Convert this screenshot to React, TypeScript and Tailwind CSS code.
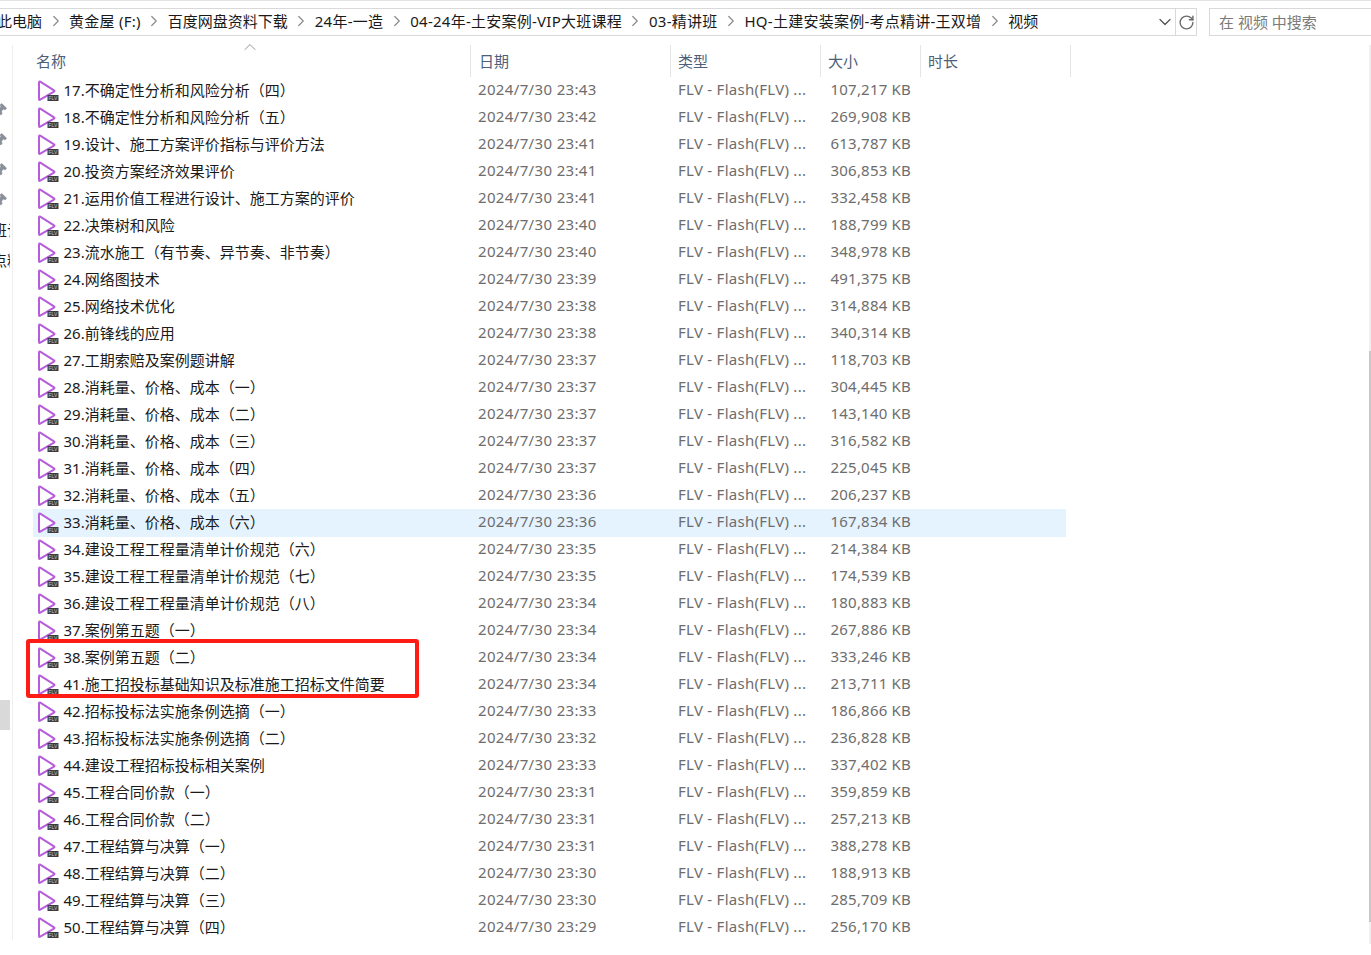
import { ChevronRight, ChevronDown, ChevronUp, RotateCw, Pin } from "lucide-react";

const pathParts = [
  "此电脑",
  "黄金屋 (F:)",
  "百度网盘资料下载",
  "24年-一造",
  "04-24年-土安案例-VIP大班课程",
  "03-精讲班",
  "HQ-土建安装案例-考点精讲-王双增",
  "视频",
];

const files: [string, string, string][] = [
  ["17.不确定性分析和风险分析（四）", "23:43", "107,217"],
  ["18.不确定性分析和风险分析（五）", "23:42", "269,908"],
  ["19.设计、施工方案评价指标与评价方法", "23:41", "613,787"],
  ["20.投资方案经济效果评价", "23:41", "306,853"],
  ["21.运用价值工程进行设计、施工方案的评价", "23:41", "332,458"],
  ["22.决策树和风险", "23:40", "188,799"],
  ["23.流水施工（有节奏、异节奏、非节奏）", "23:40", "348,978"],
  ["24.网络图技术", "23:39", "491,375"],
  ["25.网络技术优化", "23:38", "314,884"],
  ["26.前锋线的应用", "23:38", "340,314"],
  ["27.工期索赔及案例题讲解", "23:37", "118,703"],
  ["28.消耗量、价格、成本（一）", "23:37", "304,445"],
  ["29.消耗量、价格、成本（二）", "23:37", "143,140"],
  ["30.消耗量、价格、成本（三）", "23:37", "316,582"],
  ["31.消耗量、价格、成本（四）", "23:37", "225,045"],
  ["32.消耗量、价格、成本（五）", "23:36", "206,237"],
  ["33.消耗量、价格、成本（六）", "23:36", "167,834"],
  ["34.建设工程工程量清单计价规范（六）", "23:35", "214,384"],
  ["35.建设工程工程量清单计价规范（七）", "23:35", "174,539"],
  ["36.建设工程工程量清单计价规范（八）", "23:34", "180,883"],
  ["37.案例第五题（一）", "23:34", "267,886"],
  ["38.案例第五题（二）", "23:34", "333,246"],
  ["41.施工招投标基础知识及标准施工招标文件简要", "23:34", "213,711"],
  ["42.招标投标法实施条例选摘（一）", "23:33", "186,866"],
  ["43.招标投标法实施条例选摘（二）", "23:32", "236,828"],
  ["44.建设工程招标投标相关案例", "23:33", "337,402"],
  ["45.工程合同价款（一）", "23:31", "359,859"],
  ["46.工程合同价款（二）", "23:31", "257,213"],
  ["47.工程结算与决算（一）", "23:31", "388,278"],
  ["48.工程结算与决算（二）", "23:30", "188,913"],
  ["49.工程结算与决算（三）", "23:30", "285,709"],
  ["50.工程结算与决算（四）", "23:29", "256,170"],
];

function FlvIcon() {
  return (
    <svg width="22" height="22" viewBox="0 0 22 22" className="shrink-0" aria-hidden>
      <path
        d="M2 2.5 L2 19 Q2 20.3 3.2 19.7 L17 11.6 Q18 11 17 10.3 L3.2 1.6 Q2 1 2 2.5 Z"
        fill="#fff"
        stroke="#b75ddc"
        strokeWidth="2"
        strokeLinejoin="round"
      />
      <rect x="10.5" y="15" width="11" height="6" fill="#3c3c3c" />
      <text x="11.5" y="20" fontSize="5" fill="#c4c4c4" fontFamily="Liberation Sans, sans-serif">
        FLV
      </text>
    </svg>
  );
}

function HeaderCell({ label, className }: { label: string; className: string }) {
  return (
    <div className={`flex h-[32px] shrink-0 items-center border-r border-[#e5e5e5] text-[#4c607a] ${className}`}>
      {label}
    </div>
  );
}

export default function App() {
  return (
    <div
      className="relative h-[955px] w-[1371px] overflow-hidden bg-white text-[15px]"
      style={{ fontFamily: '"Noto Sans", "Noto Sans CJK SC", sans-serif' }}
    >
      {/* Address bar + search */}
      <div className="flex h-[36px] items-stretch border-t border-[#e3e3e3] pt-[7px]">
        <div className="flex w-[1197px] shrink-0 items-center border-y border-r border-[#d9d9d9]">
          <div className="-ml-[3px] -mt-[2px] flex flex-1 items-center gap-[4.5px] text-[#1a1a1a]">
            {pathParts.map((part, i) => (
              <div key={part} className="flex items-center gap-[4.5px]">
                {i > 0 && <ChevronRight size={18} strokeWidth={1.6} className="text-[#8c8c8c]" />}
                <span className={/[-(]/.test(part) ? "whitespace-nowrap leading-[26px] tracking-[0.25px]" : "whitespace-nowrap leading-[26px]"}>
                  {part}
                </span>
              </div>
            ))}
          </div>
          <div className="flex h-full w-[16px] items-center justify-center">
            <ChevronDown size={20} strokeWidth={1.5} className="shrink-0 text-[#555]" />
          </div>
          <div className="ml-[2px] flex h-full w-[21px] items-center justify-center border-l border-[#d9d9d9]">
            <RotateCw size={17} strokeWidth={2} className="shrink-0 text-[#6b6b6b]" />
          </div>
        </div>
        <div className="ml-[12px] flex flex-1 items-center border-y border-l border-[#d9d9d9] pl-[9px] text-[#7a7a7a]">
          在 视频 中搜索
        </div>
      </div>

      <div className="flex h-[919px]">
        {/* Clipped navigation pane */}
        <div className="mt-[9px] h-[895px] w-[13px] shrink-0 overflow-hidden border-r border-[#efefef]">
          <div className="flex w-[12px] flex-col items-end pt-[50px]">
            {[0, 1, 2, 3].map((n) => (
              <div key={n} className="flex h-[30px] w-full items-center justify-start">
                <Pin size={14} fill="#8a9099" strokeWidth={1.5} className="-ml-[7px] shrink-0 rotate-45 text-[#8a9099]" />
              </div>
            ))}
            <div className="flex h-[30px] w-[10px] items-center self-start overflow-hidden whitespace-nowrap text-[#1a1a1a]">
              <span className="-ml-[8px]">班计</span>
            </div>
            <div className="flex h-[30px] w-[10px] items-center self-start overflow-hidden whitespace-nowrap text-[#1a1a1a]">
              <span className="-ml-[8px]">点精</span>
            </div>
            <div className="mt-[425px] h-[30px] w-[10px] self-start bg-[#d9d9d9]" />
          </div>
        </div>

        {/* File list */}
        <div className="ml-[8px] w-[1050px] shrink-0">
          <div className="relative mt-[9px] flex h-[32px] items-center">
            <ChevronUp size={20} strokeWidth={1} className="absolute left-[219px] -top-[8px] text-[#808080]" />
            <HeaderCell label="名称" className="w-[450px] pl-[15px]" />
            <HeaderCell label="日期" className="w-[200px] pl-[8px]" />
            <HeaderCell label="类型" className="w-[150px] pl-[7px]" />
            <HeaderCell label="大小" className="w-[100px] pl-[7px]" />
            <HeaderCell label="时长" className="w-[150px] pl-[7px]" />
          </div>
          <div className="ml-[12px] w-[1033px]">
            {files.map(([name, time, size]) => (
              <div
                key={name}
                className={
                  name.startsWith("33.")
                    ? "-mb-px flex h-[28px] items-center bg-[#e5f3ff] pb-px"
                    : "flex h-[27px] items-center"
                }
              >
                <div className="flex w-[437px] shrink-0 items-center gap-[7px] pl-[4px] whitespace-nowrap text-[#1a1a1a]">
                  <FlvIcon />
                  <span className="-ml-[2.5px]">{name}</span>
                </div>
                <div className="-mt-[2px] w-[200px] shrink-0 pl-[8px] tracking-[0.35px] text-[#6d6d6d]">2024/7/30 {time}</div>
                <div className="-mt-[2px] w-[140px] shrink-0 pl-[8px] tracking-[0.27px] text-[#6d6d6d]">FLV - Flash(FLV) ...</div>
                <div className="-mt-[2px] w-[101px] shrink-0 text-right tracking-[0.2px] text-[#6d6d6d]">{size} KB</div>
              </div>
            ))}
          </div>
        </div>

        {/* Scrollbar */}
        <div className="ml-auto mt-[9px] flex h-[899px] w-[2px] flex-col bg-[#f0f0f0]">
          <div className="mt-[306px] h-[571px] bg-[#c8c8c8]" />
        </div>
      </div>

      {/* Red annotation box */}
      <div className="absolute left-[26px] top-[639px] h-[59px] w-[393px] rounded-[3px] border-[4px] border-[#ff1c14]" />
    </div>
  );
}
